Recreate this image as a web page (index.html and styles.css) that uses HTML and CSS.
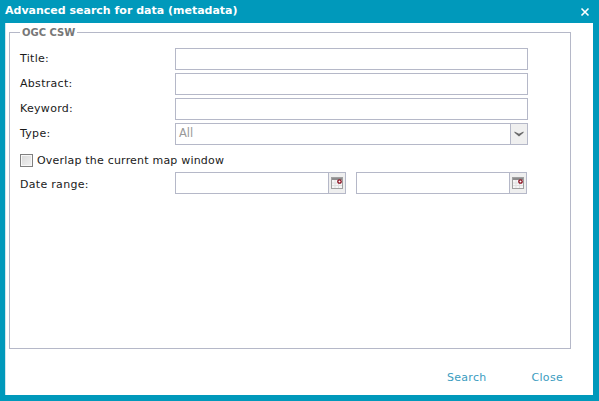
FILE: index.html
```html
<!DOCTYPE html>
<html lang="en">
<head>
<meta charset="utf-8">
<title>Advanced search</title>
<link rel="stylesheet" href="styles.css">
</head>
<body>
<div class="window">
  <header class="titlebar">
    <span class="title">Advanced search for data (metadata)</span>
    <svg class="close-icon" width="10" height="10" viewBox="0 0 10 10"><path d="M1.5 1.5L8.5 8.5M8.5 1.5L1.5 8.5" stroke="#fff" stroke-width="1.6" fill="none"/></svg>
  </header>
  <div class="body">
    <fieldset class="group">
      <legend class="legend">OGC CSW</legend>
      <div class="row"><label class="label">Title:</label><div class="input wide"></div></div>
      <div class="row"><label class="label">Abstract:</label><div class="input wide"></div></div>
      <div class="row"><label class="label">Keyword:</label><div class="input wide"></div></div>
      <div class="row"><label class="label">Type:</label>
        <div class="input wide combo"><span class="value">All</span>
          <span class="trigger"><svg width="10" height="6" viewBox="0 0 10 6"><path d="M0.500 0.500L5 2.800L9.500 0.500V1.800L5 5.500L0.500 1.800Z" fill="#6a6a6a"/></svg></span>
        </div>
      </div>
      <div class="check-row"><span class="checkbox"></span><span class="check-label">Overlap the current map window</span></div>
      <div class="row"><label class="label label-date">Date range:</label>
        <div class="dates">
          <div class="input date"><span class="trigger cal"><svg width="12" height="12" viewBox="0 0 12 12"><rect x=".5" y=".5" width="11" height="11" fill="#f6f6f6" stroke="#a0a0a0"/><rect x="1" y="1" width="10" height="2" fill="#8c8c8c"/><path d="M4 3V11M7.500 3V11M1 6H11M1 8.500H11" stroke="#e0e0e0"/><circle cx="8.500" cy="4.500" r="1.700" fill="#fff" stroke="#8b0f1f" stroke-width="1.300"/></svg></span></div>
          <div class="input date"><span class="trigger cal"><svg width="12" height="12" viewBox="0 0 12 12"><rect x=".5" y=".5" width="11" height="11" fill="#f6f6f6" stroke="#a0a0a0"/><rect x="1" y="1" width="10" height="2" fill="#8c8c8c"/><path d="M4 3V11M7.500 3V11M1 6H11M1 8.500H11" stroke="#e0e0e0"/><circle cx="8.500" cy="4.500" r="1.700" fill="#fff" stroke="#8b0f1f" stroke-width="1.300"/></svg></span></div>
        </div>
      </div>
    </fieldset>
    <footer class="buttons"><span class="btn">Search</span><span class="btn">Close</span></footer>
  </div>
</div>
</body>
</html>
```

FILE: styles.css
```css
* { box-sizing: border-box; }
html, body { margin: 0; padding: 0; }
body {
  width: 599px; height: 401px; overflow: hidden;
  font-family: "DejaVu Sans", Verdana, sans-serif;
  font-size: 11px; color: #1a1a1a;
}
.window {
  width: 599px; height: 401px;
  background: #0099bb;
  padding: 0 6px 6px 5px;
  display: flex; flex-direction: column;
}
.titlebar {
  height: 23px; flex: none;
  display: flex; align-items: center; justify-content: space-between;
  padding: 0 3px 3px 1px;
}
.title { color: #fff; font-weight: bold; font-size: 11px; margin-left: -1px; }
.close-icon { margin-top: 4px; }
.body {
  flex: 1; background: #fff;
  border-left: 1px solid #cfe6ee;
  padding: 4px 22px 0 3px;
  display: flex; flex-direction: column;
}
.group {
  margin: 0; height: 322px; flex: none;
  border: 1px solid #b5b8c8;
  padding: 0 9px;
  min-width: 0;
}
.legend {
  margin-left: 1px; padding: 0 2px;
  font-weight: bold; color: #777; font-size: 10px; line-height: 11px;
  height: 11px;
}
.row {
  display: flex; align-items: center;
  height: 22px; margin-bottom: 3px;
}
.row:first-of-type { margin-top: 10px; }
.label { width: 156px; flex: none; letter-spacing: 0.3px; padding: 0 0 2px 1px; }
.label-date { padding: 2px 0 0 1px; }
.input {
  height: 22px; background: #fff;
  border: 1px solid #b5b8c8;
  display: flex; align-items: center; justify-content: space-between;
}
.wide { width: 353px; }
.value { color: #999; padding: 0 0 2px 3px; font-size: 11.500px; }
.trigger {
  width: 17px; height: 20px; flex: none;
  background: #efefef; border-left: 1px solid #b5b8c8;
  display: flex; align-items: center; justify-content: center;
}
.dates { display: flex; gap: 10px; }
.date { width: 171px; justify-content: flex-end; }
.check-row {
  display: flex; align-items: center;
  height: 14px; margin: 8px 0 5px 1px;
}
.checkbox {
  width: 13px; height: 13px; flex: none;
  border: 1px solid #808080;
  background: linear-gradient(135deg, #d8d8d8, #f2f2f2);
  box-shadow: inset 0 0 0 1px #f8f8f8;
  margin-right: 4px;
}
.check-label { white-space: nowrap; letter-spacing: 0.2px; }
.buttons {
  display: flex; justify-content: flex-end;
  gap: 45px; padding: 22px 8px 0 0;
}
.btn { color: #3b9cc0; letter-spacing: 0.3px; }
```
